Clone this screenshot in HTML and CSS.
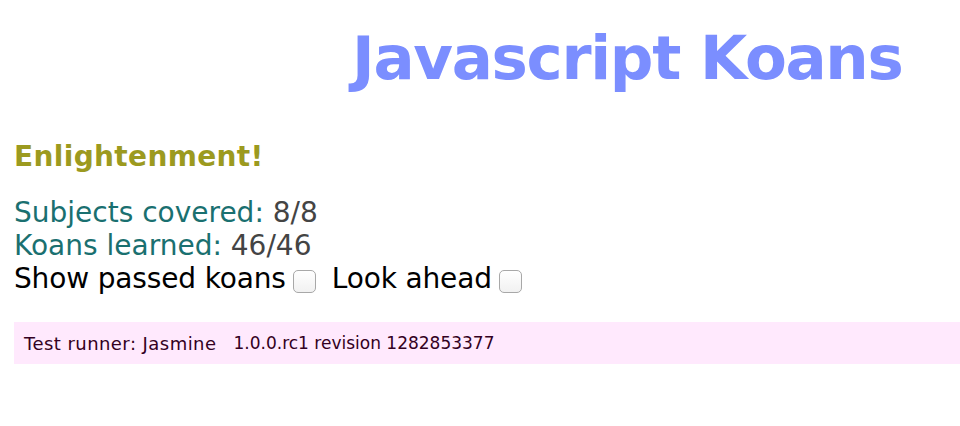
FILE: index.html
```html
<!DOCTYPE html>
<html>
<head>
<meta charset="utf-8">
<link rel="stylesheet" href="styles.css">
</head>
<body>
<div class="page">
  <h1 class="title">Javascript Koans</h1>
  <div class="report">
    <h2 class="status">Enlightenment!</h2>
    <div class="stats">
      <div class="stat"><span class="label">Subjects covered:</span> <span class="value">8/8</span></div>
      <div class="stat"><span class="label">Koans learned:</span> <span class="value">46/46</span></div>
      <div class="options"><span class="option">Show passed koans</span><span class="box"></span><span class="option option-next">Look ahead</span><span class="box"></span></div>
    </div>
  </div>
  <div class="banner">
    <span class="runner">Test runner: Jasmine</span>
    <span class="version">1.0.0.rc1 revision 1282853377</span>
  </div>
</div>
</body>
</html>
```
FILE: styles.css
```css
html, body {
  margin: 0;
  padding: 0;
  background: #ffffff;
}
.page {
  padding: 16px 0 0 14px;
  font-family: "DejaVu Sans", Verdana, sans-serif;
}
.title {
  margin: 0;
  padding-left: 338px;
  font-size: 61px;
  line-height: 84px;
  font-weight: bold;
  color: #7b8eff;
  letter-spacing: -1.3px;
}
.report {
  padding-top: 41px;
}
.status {
  margin: 0;
  font-size: 28px;
  line-height: 32px;
  font-weight: bold;
  color: #9c9a1f;
  letter-spacing: 0.35px;
}
.stats {
  padding-top: 23px;
  font-size: 28px;
  line-height: 33px;
}
.label {
  color: #1a7070;
}
.value {
  color: #444444;
}
.options {
  color: #000000;
}
.option {
  letter-spacing: -0.15px;
}
.option-next {
  margin-left: 16px;
}
.box {
  display: inline-block;
  width: 23px;
  height: 23px;
  box-sizing: border-box;
  margin-left: 7px;
  vertical-align: -5px;
  border: 1px solid #a8a8a8;
  border-radius: 5px;
  background: linear-gradient(#ffffff, #f1f1f1);
}
.banner {
  margin-top: 27px;
  height: 42px;
  display: flex;
  align-items: center;
  gap: 17px;
  padding-left: 10px;
  background: #ffe9fd;
  color: #330022;
  font-size: 18px;
}
.runner {
  letter-spacing: 0.45px;
}
.version {
  font-size: 17px;
}
```
